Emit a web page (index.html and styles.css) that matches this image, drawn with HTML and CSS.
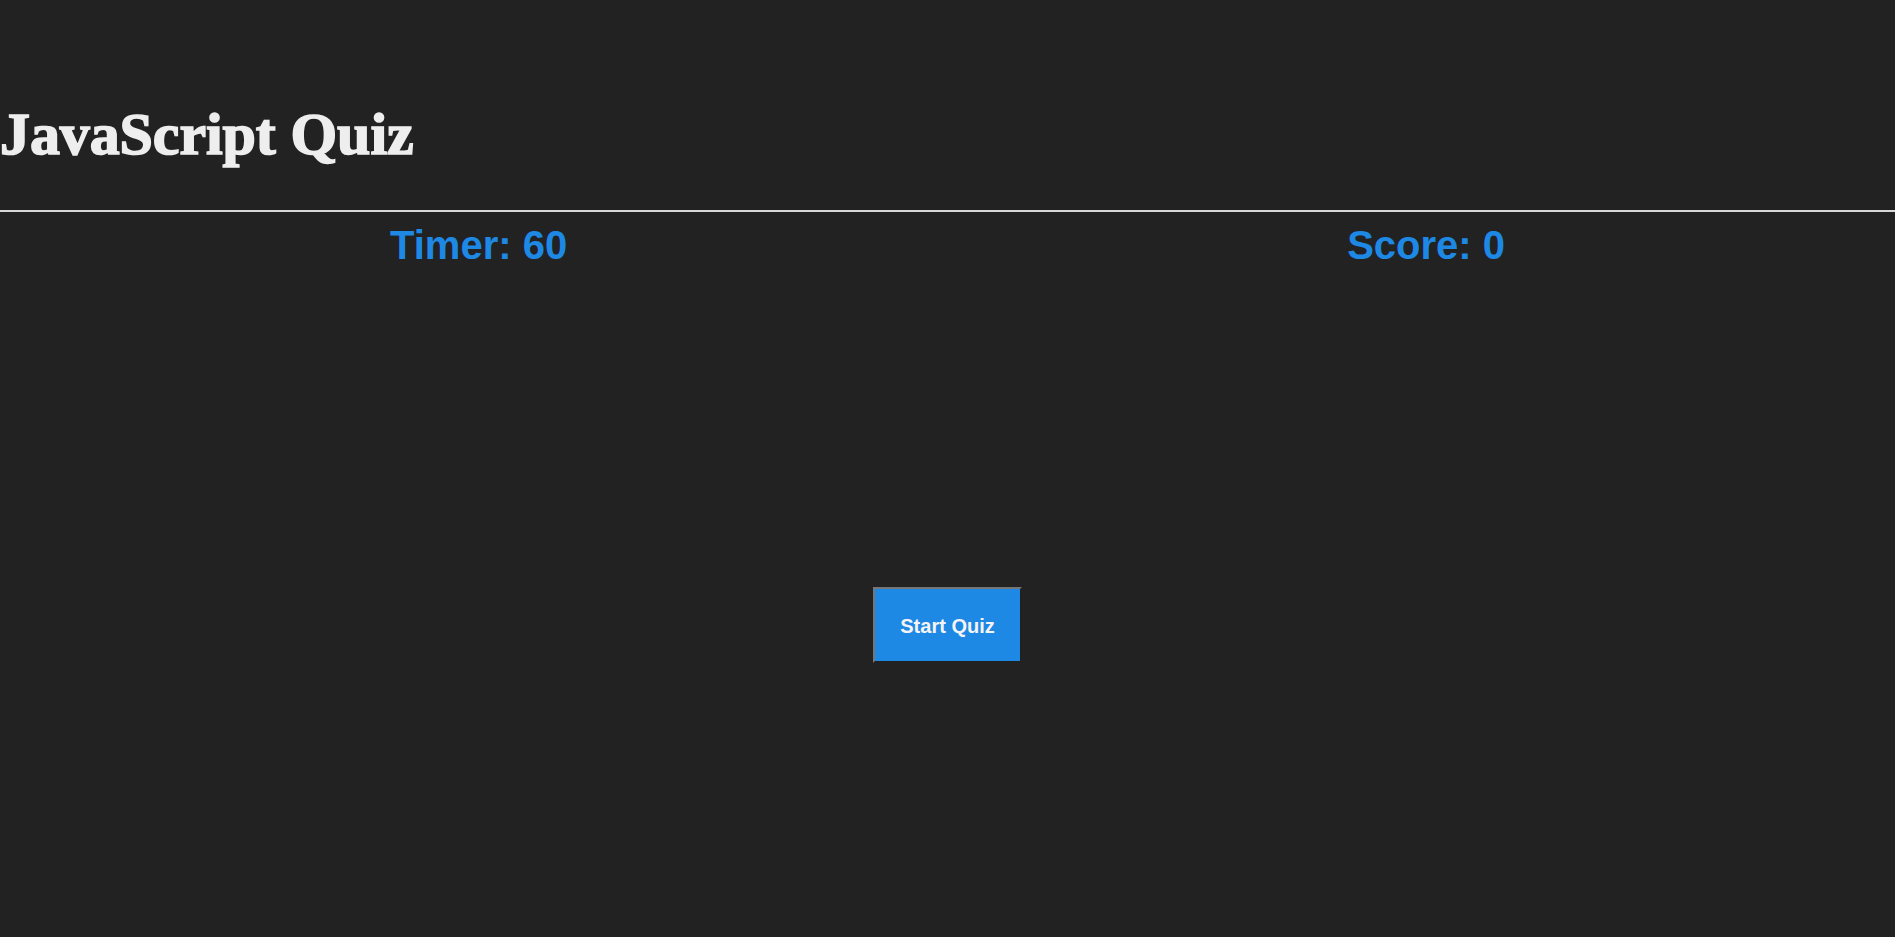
FILE: index.html
```html
<!DOCTYPE html>
<html lang="en">
<head>
<meta charset="utf-8">
<title>JavaScript Quiz</title>
<link rel="stylesheet" href="styles.css">
</head>
<body>
  <header class="site-header">
    <h1 class="title">JavaScript Quiz</h1>
  </header>
  <section class="stats">
    <h2 class="stat">Timer: 60</h2>
    <h2 class="stat">Score: 0</h2>
  </section>
  <main class="quiz">
    <button class="start-btn" type="button">Start Quiz</button>
  </main>
</body>
</html>
```

FILE: styles.css
```css
html, body {
  margin: 0;
  padding: 0;
}

body {
  background: #222222;
  color: #eeeeee;
  font-family: "Liberation Serif", "Times New Roman", serif;
  min-height: 937px;
}

.site-header {
  padding: 100px 0 41px;
  border-bottom: 2px solid #d8d8d8;
}

.title {
  margin: 0;
  font-family: "Liberation Serif", "Times New Roman", serif;
  font-size: 60px;
  font-weight: 700;
  color: #eeeeee;
  -webkit-text-stroke: 1.6px #eeeeee;
  letter-spacing: -0.1px;
  line-height: 69px;
}

.stats {
  display: flex;
  justify-content: space-around;
  margin-top: 10px;
}

.stat {
  margin: 0;
  font-family: "Liberation Sans", Arial, sans-serif;
  font-size: 40px;
  font-weight: bold;
  line-height: 46px;
  color: #1e88e5;
}

.quiz {
  display: flex;
  justify-content: center;
  padding-top: 319px;
}

.start-btn {
  font-family: "Liberation Sans", Arial, sans-serif;
  font-size: 20px;
  font-weight: bold;
  line-height: 23px;
  color: #f4f4f4;
  background: #1e88e5;
  border: 2px outset #767676;
  padding: 26px 25px 23px;
  cursor: pointer;
}
```
